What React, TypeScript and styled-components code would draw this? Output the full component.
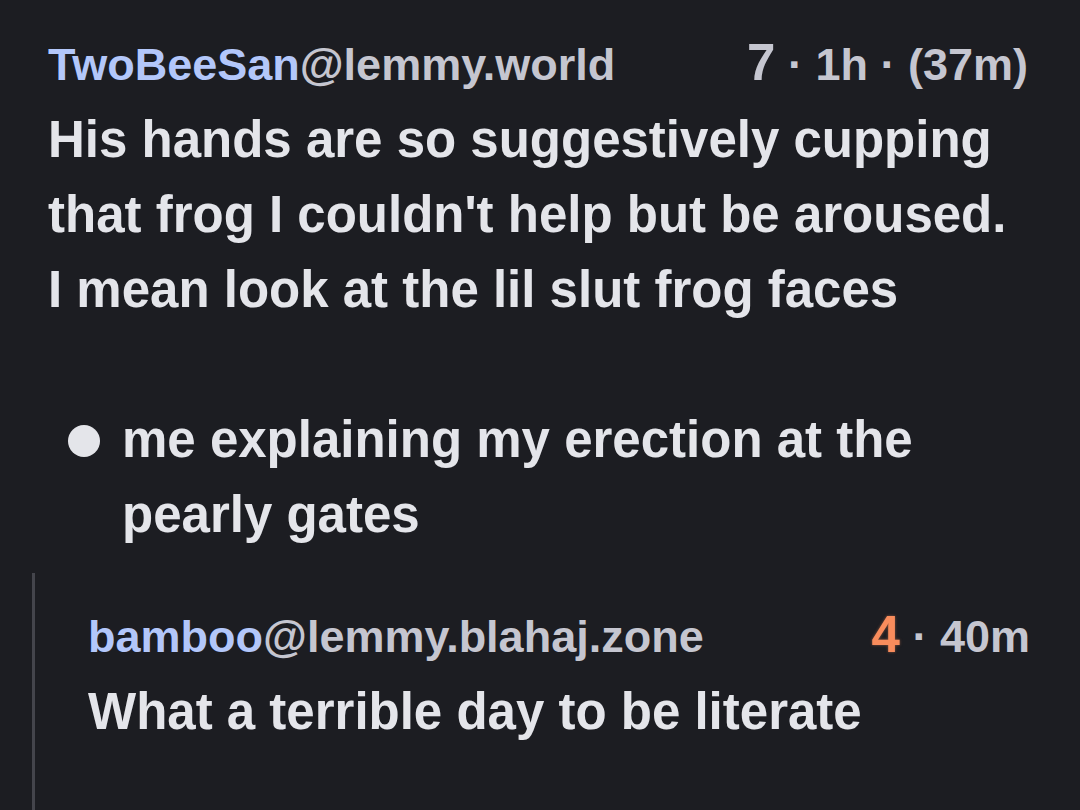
import React from 'react';
import styled, { createGlobalStyle } from 'styled-components';

const GlobalStyle = createGlobalStyle`
   html, body {
      margin: 0;
      background: #1c1d22;
   }
   body {
      font-family: 'Liberation Sans', Arial, sans-serif;
      font-weight: 700;
      color: #e4e5ea;
   }
`;

const Page = styled.div`
   display: flex;
   flex-direction: column;
   min-height: 100vh;
   box-sizing: border-box;
   padding: 33px 50px 0 32px;
`;

const Comment = styled.div`
   padding: 0 2px 0 16px;
`;

const Reply = styled.div`
   flex: 1;
   margin-top: 21px;
   padding: 32px 0 0 53px;
   border-left: 3px solid #44454c;
`;

const Header = styled.div`
   display: flex;
   align-items: baseline;
   justify-content: space-between;
   height: 60px;
   line-height: 60px;
   font-size: 45px;
   margin-bottom: 9px;
`;

const Author = styled.div`
   color: #c5c6d0;
   white-space: nowrap;
`;

const Name = styled.span`
   color: #b3c7fa;
`;

const Meta = styled.div`
   color: #c5c6d0;
   white-space: nowrap;
`;

const Score = styled.span<{ $hot?: boolean }>`
   font-size: 51px;
   color: ${(p) => (p.$hot ? '#f88c5c' : '#c5c6d0')};
   text-shadow: ${(p) => (p.$hot ? '0 0 3px rgba(248,140,92,0.5)' : 'none')};
`;

const Body = styled.div`
   max-width: 975px;
   font-size: 51px;
   line-height: 75px;

   p {
      margin: 0 0 75px;
   }

   p:last-child {
      margin-bottom: 0;
   }
`;

const List = styled.ul`
   margin: 0;
   padding: 0 0 0 20px;
   list-style: none;
`;

const Item = styled.li`
   display: flex;
   gap: 22px;
`;

const Dot = styled.span`
   flex: none;
   width: 32px;
   height: 32px;
   margin-top: 23px;
   border-radius: 50%;
   background: #e4e5ea;
`;

function CommentHeader({
   name,
   instance,
   score,
   hot,
   time,
}: {
   name: string;
   instance: string;
   score: number;
   hot?: boolean;
   time: string;
}) {
   return (
      <Header>
         <Author>
            <Name>{name}</Name>@{instance}
         </Author>
         <Meta>
            <Score $hot={hot}>{score}</Score> · {time}
         </Meta>
      </Header>
   );
}

export default function App() {
   return (
      <>
         <GlobalStyle />
         <Page>
            <Comment>
               <CommentHeader
                  name="TwoBeeSan"
                  instance="lemmy.world"
                  score={7}
                  time="1h · (37m)"
               />
               <Body>
                  <p>
                     His hands are so suggestively cupping that frog I couldn't
                     help but be aroused. I mean look at the lil slut frog faces
                  </p>
                  <List>
                     <Item>
                        <Dot />
                        <span>me explaining my erection at the pearly gates</span>
                     </Item>
                  </List>
               </Body>
            </Comment>
            <Reply>
               <CommentHeader
                  name="bamboo"
                  instance="lemmy.blahaj.zone"
                  score={4}
                  hot
                  time="40m"
               />
               <Body>
                  <p>What a terrible day to be literate</p>
               </Body>
            </Reply>
         </Page>
      </>
   );
}
